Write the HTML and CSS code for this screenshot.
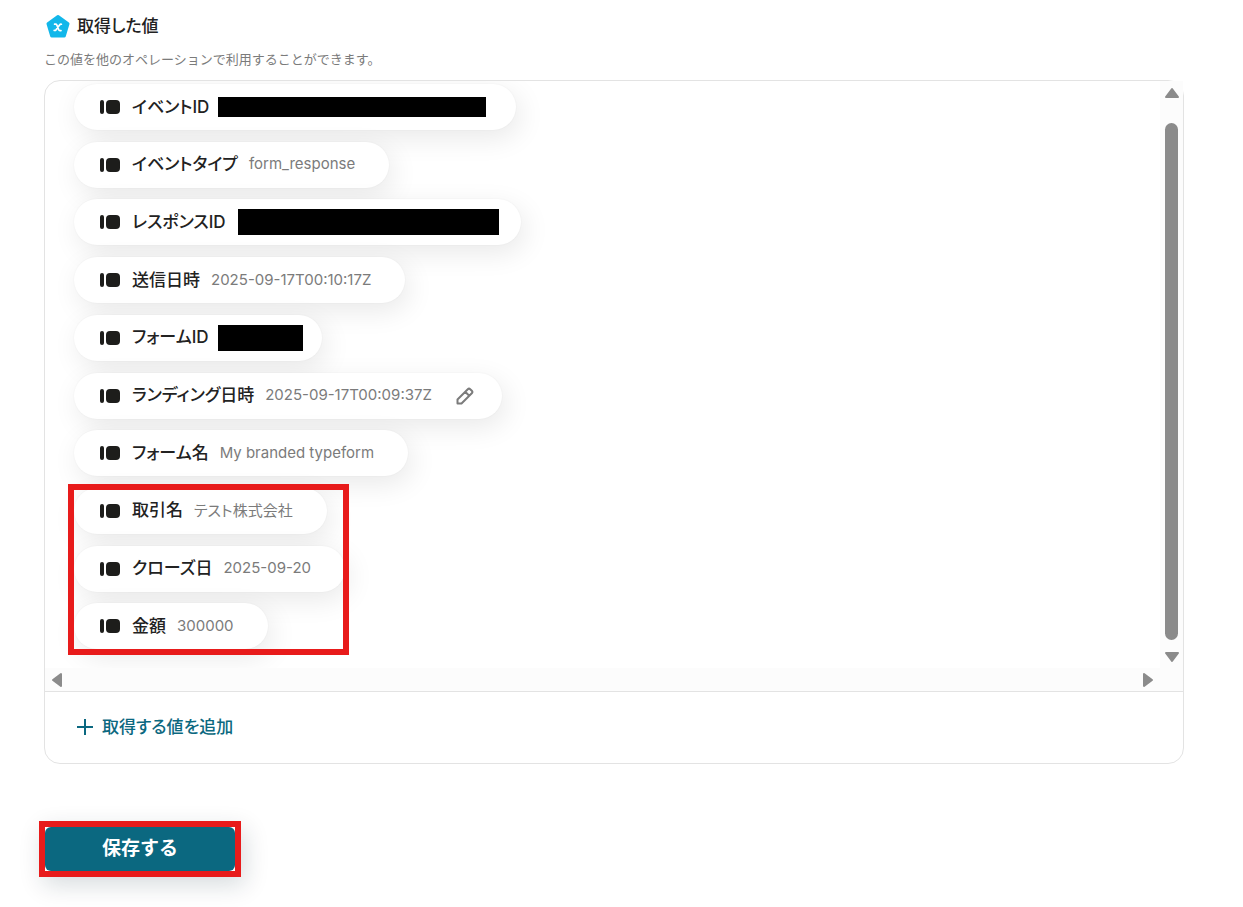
FILE: index.html
```html
<!DOCTYPE html>
<html lang="ja">
<head>
  <meta charset="UTF-8">
  <meta name="viewport" content="width=device-width, initial-scale=1.0">
  <title>取得した値</title>
  <link rel="stylesheet" href="styles.css">
</head>
<body>
  <svg width="0" height="0" class="sprite" aria-hidden="true">
    <symbol id="icon-field" viewBox="0 0 22 16">
      <rect x="0" y="1" width="4" height="14" rx="2"/>
      <rect x="6" y="1" width="14" height="14" rx="4"/>
    </symbol>
    <symbol id="icon-arrow" viewBox="0 0 16 12">
      <path d="M8 2 L14 10 H2 Z" stroke-width="2" stroke-linejoin="round"/>
    </symbol>
  </svg>

  <main class="page">
    <header class="heading">
      <h2>
        <svg class="badge" viewBox="0 0 24 24" aria-hidden="true">
          <path d="M12 2.5 L22 9.8 L18.3 22 H5.7 L2 9.8 Z" fill="#12b7ea" stroke="#12b7ea" stroke-width="3" stroke-linejoin="round"/>
          <path d="M8.6 10.2 H9.6 Q10.4 10.2 10.9 11.2 L12.6 15.4 Q13 16.6 14 16.6 H15 M15.4 10.2 Q14.4 9.8 13.4 11.2 L10.2 15.6 Q9.2 16.8 8.2 16.4" fill="none" stroke="#fff" stroke-width="1.7" stroke-linecap="round"/>
        </svg>
        取得した値
      </h2>
      <p>この値を他のオペレーションで利用することができます。</p>
    </header>

    <section class="card">
      <div class="scroll-area">
        <div class="viewport">
          <ul class="values">
            <li class="pill"><svg class="field"><use href="#icon-field"/></svg><b>イベントID</b><span class="masked masked-event"></span></li>
            <li class="pill"><svg class="field"><use href="#icon-field"/></svg><b>イベントタイプ</b><span class="value">form_response</span></li>
            <li class="pill"><svg class="field"><use href="#icon-field"/></svg><b>レスポンスID</b><span class="masked masked-response"></span></li>
            <li class="pill"><svg class="field"><use href="#icon-field"/></svg><b>送信日時</b><span class="value">2025-09-17T00:10:17Z</span></li>
            <li class="pill"><svg class="field"><use href="#icon-field"/></svg><b>フォームID</b><span class="masked masked-form"></span></li>
            <li class="pill editable"><svg class="field"><use href="#icon-field"/></svg><b>ランディング日時</b><span class="value">2025-09-17T00:09:37Z</span>
              <button type="button" class="edit" aria-label="編集">
                <svg viewBox="0 0 18 18" aria-hidden="true">
                  <path d="M1.5 16.5 V12.5 L11.8 2.2 Q13 1 14.2 2.2 L15.8 3.8 Q17 5 15.8 6.2 L5.5 16.5 Z M9.2 4.8 L13.2 8.8"/>
                </svg>
              </button>
            </li>
            <li class="pill"><svg class="field"><use href="#icon-field"/></svg><b>フォーム名</b><span class="value">My branded typeform</span></li>
            <li class="pill"><svg class="field"><use href="#icon-field"/></svg><b>取引名</b><span class="value">テスト株式会社</span></li>
            <li class="pill"><svg class="field"><use href="#icon-field"/></svg><b>クローズ日</b><span class="value">2025-09-20</span></li>
            <li class="pill"><svg class="field"><use href="#icon-field"/></svg><b>金額</b><span class="value">300000</span></li>
          </ul>
        </div>
        <div class="bar bar-y">
          <svg class="arrow"><use href="#icon-arrow"/></svg>
          <span class="thumb"></span>
          <svg class="arrow down"><use href="#icon-arrow"/></svg>
        </div>
        <div class="bar bar-x">
          <svg class="arrow left"><use href="#icon-arrow"/></svg>
          <svg class="arrow right"><use href="#icon-arrow"/></svg>
        </div>
      </div>
      <div class="card-footer">
        <button type="button" class="add">
          <svg viewBox="0 0 16 16" aria-hidden="true"><path d="M8 0 V16 M0 8 H16"/></svg>
          取得する値を追加
        </button>
      </div>
    </section>

    <div class="save-frame">
      <button type="button" class="save">保存する</button>
    </div>
  </main>
</body>
</html>
```

FILE: styles.css
```css
*,
*::after {
  box-sizing: border-box;
}
body {
  margin: 0;
  background: #fff;
  color: #222;
  font-family: Inter, "Noto Sans CJK JP", sans-serif;
}
button {
  font: inherit;
  border: none;
  background: none;
  padding: 0;
  cursor: pointer;
}
.sprite {
  position: absolute;
}
.page {
  padding: 12px 59px 30px 44px;
}

.heading h2 {
  display: flex;
  align-items: center;
  gap: 7px;
  margin: 0;
  padding-left: 2px;
  font-size: 17px;
  line-height: 28px;
  font-weight: 500;
  font-feature-settings: "palt";
}
.badge {
  width: 24px;
  height: 24px;
}
.heading p {
  margin: 8px 0 10px;
  font-size: 13px;
  line-height: 22px;
  color: #7b7b7b;
}

.card {
  border: 1px solid #e3e3e3;
  border-radius: 16px;
}
.scroll-area {
  display: grid;
  grid-template-columns: 1fr 23px;
  grid-template-rows: auto 23px;
  border-bottom: 1px solid #e3e3e3;
}
.viewport {
  overflow: hidden;
  padding: 3px 29px 7px;
  border-top-left-radius: 15px;
}
.values {
  display: grid;
  grid-template-rows: repeat(10, 1fr);
  justify-items: start;
  height: 577px;
  margin: 0;
  padding: 0;
  list-style: none;
}
/* frame around the last three values */
.values::after {
  content: "";
  grid-row: 8 / 11;
  grid-column: 1;
  width: 281px;
  margin: -4px 0 6px -6px;
  border: 6px solid #e81b1b;
  z-index: 1;
}
.pill {
  grid-column: 1;
  display: flex;
  align-items: center;
  height: 46px;
  padding: 0 34px 0 26px;
  border-radius: 23px;
  background: #fff;
  box-shadow: 4px 8px 28px rgba(0, 0, 0, 0.09), 0 0 2px rgba(0, 0, 0, 0.05);
  font-feature-settings: "palt";
  white-space: nowrap;
}
.pill:nth-child(1) { grid-row: 1; }
.pill:nth-child(2) { grid-row: 2; }
.pill:nth-child(3) { grid-row: 3; }
.pill:nth-child(4) { grid-row: 4; }
.pill:nth-child(5) { grid-row: 5; }
.pill:nth-child(6) { grid-row: 6; }
.pill:nth-child(7) { grid-row: 7; }
.pill:nth-child(8) { grid-row: 8; }
.pill:nth-child(9) { grid-row: 9; }
.pill:nth-child(10) { grid-row: 10; }
.field {
  width: 22px;
  height: 16px;
  margin-right: 10px;
  fill: #1d1d1b;
}
.pill b {
  padding-bottom: 4px;
  font-size: 17px;
  font-weight: 500;
}
.value {
  margin-left: 11px;
  padding-bottom: 2px;
  font-size: 15px;
  color: #7b7b7b;
}
.masked {
  background: #000;
}
.masked-event {
  width: 268px;
  height: 20px;
  margin: 0 -4px 0 9px;
}
.masked-response {
  width: 261px;
  height: 26px;
  margin: 0 -12px 0 12px;
}
.masked-form {
  width: 85px;
  height: 26px;
  margin: 0 -15px 0 9px;
}
.editable {
  padding-right: 28px;
}
.edit {
  display: flex;
  margin-left: 24px;
}
.edit svg {
  width: 18px;
  height: 18px;
  fill: none;
  stroke: #7b7b7b;
  stroke-width: 2;
  stroke-linejoin: round;
}

.bar {
  display: flex;
  align-items: center;
  justify-content: space-between;
  background: #fcfcfc;
}
.bar-y {
  flex-direction: column;
  padding: 6px 0 5px;
}
.bar-x {
  grid-column: 1 / 3;
  padding: 0 27px 0 4px;
}
.thumb {
  flex: 1;
  width: 13px;
  margin: 24px 0 11px;
  border-radius: 7px;
  background: #8b8b8b;
}
.arrow {
  width: 16px;
  height: 12px;
  fill: #8b8b8b;
  stroke: #8b8b8b;
}
.down {
  transform: rotate(180deg);
}
.left {
  transform: rotate(-90deg);
}
.right {
  transform: rotate(90deg);
}

.card-footer {
  padding: 20px 32px 21px;
}
.add {
  display: flex;
  align-items: center;
  gap: 9px;
  font-size: 17px;
  line-height: 30px;
  font-weight: 500;
  font-feature-settings: "palt";
  color: #0b6880;
}
.add svg {
  width: 16px;
  height: 16px;
  fill: none;
  stroke: #0b6880;
  stroke-width: 2;
}

.save-frame {
  display: inline-block;
  margin: 57px 0 0 -5px;
  border: 6px solid #e81b1b;
  box-shadow: 4px 8px 24px rgba(0, 40, 50, 0.16);
}
.save {
  display: block;
  padding: 0 57px;
  border-radius: 6px;
  background: #0b6880;
  color: #fff;
  font-size: 19px;
  line-height: 44px;
  font-weight: 700;
}
```
